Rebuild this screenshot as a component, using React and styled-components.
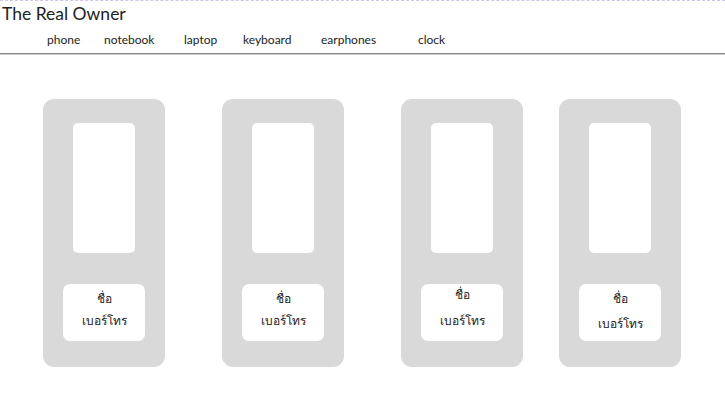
import React from "react";
import styled, { createGlobalStyle } from "styled-components";

const GlobalStyle = createGlobalStyle`
  html, body {
    margin: 0;
    padding: 0;
    background: #ffffff;
  }
  body {
    font-family: Lato, "Noto Sans", sans-serif;
    color: #222;
  }
`;

const Page = styled.div`
  width: 725px;
  height: 409px;
  border-top: 1px dashed #cfc4ea;
  box-sizing: border-box;
  overflow: hidden;
`;

const Title = styled.h1`
  margin: 0;
  padding: 1px 0 0 2px;
  font-size: 17.5px;
  font-weight: 400;
  line-height: 23px;
  color: #222;
`;

const NavBar = styled.nav`
  display: flex;
  align-items: center;
  height: 29px;
  box-sizing: border-box;
  padding: 2px 0 0 47px;
  border-bottom: 1px solid #8a8a8a;
  box-shadow: 0 1px 0 #c8c8c8;
`;

const NavLink = styled.a`
  width: ${(p) => p.$w}px;
  flex: none;
  font-size: 12px;
  color: #222;
  text-decoration: none;
  line-height: 16px;
`;

const CardRow = styled.div`
  display: flex;
  padding: 45px 0 0 43px;
`;

const Card = styled.div`
  width: 122px;
  height: 268px;
  flex: none;
  margin-left: ${(p) => p.$gap}px;
  background: #d9d9d9;
  border-radius: 11px;
  display: flex;
  flex-direction: column;
  align-items: center;
  padding-top: 24px;
  box-sizing: border-box;
`;

const Picture = styled.div`
  width: 62px;
  height: 130px;
  background: #fff;
  border-radius: 5px;
`;

const Info = styled.div`
  margin-top: 31px;
  width: 82px;
  height: 57px;
  background: #fff;
  border-radius: 7px;
  display: flex;
  flex-direction: column;
  align-items: center;
  padding-top: ${(p) => p.$top}px;
  box-sizing: border-box;
  font-family: "Noto Sans", sans-serif;
  font-size: 12px;
  color: #222;
`;

const Line = styled.div`
  line-height: 16px;
  margin-top: ${(p) => p.$mt || 0}px;
`;

const links = [
  ["phone", 57],
  ["notebook", 80],
  ["laptop", 59],
  ["keyboard", 78],
  ["earphones", 97],
  ["clock", 40],
];

const cards = [
  { gap: 0, top: 7, mt: 6 },
  { gap: 57, top: 7, mt: 6 },
  { gap: 57, top: 3, mt: 10 },
  { gap: 36, top: 7, mt: 9 },
];

export default function App() {
  return (
    <>
      <GlobalStyle />
      <Page>
        <Title>The Real Owner</Title>
        <NavBar>
          {links.map(([name, w]) => (
            <NavLink key={name} $w={w} href="#">
              {name}
            </NavLink>
          ))}
        </NavBar>
        <CardRow>
          {cards.map((c, i) => (
            <Card key={i} $gap={c.gap}>
              <Picture />
              <Info $top={c.top}>
                <Line>ชื่อ</Line>
                <Line $mt={c.mt}>เบอร์โทร</Line>
              </Info>
            </Card>
          ))}
        </CardRow>
      </Page>
    </>
  );
}
